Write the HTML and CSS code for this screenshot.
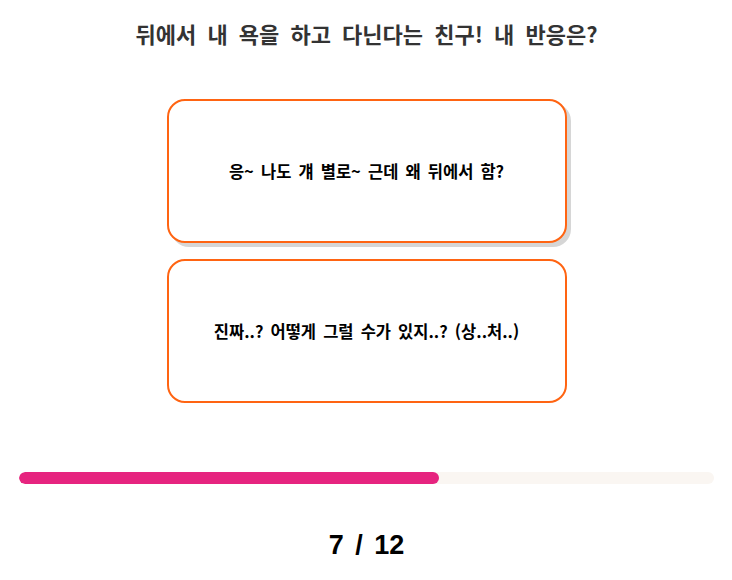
FILE: index.html
```html
<!DOCTYPE html>
<html lang="ko">
<head>
<meta charset="utf-8">
<link rel="stylesheet" href="styles.css">
</head>
<body>
<main class="quiz">
  <h1 class="question">뒤에서 내 욕을 하고 다닌다는 친구! 내 반응은?</h1>
  <div class="answers">
    <button class="answer hovered">응~ 나도 걔 별로~ 근데 왜 뒤에서 함?</button>
    <button class="answer">진짜..? 어떻게 그럴 수가 있지..? (상..처..)</button>
  </div>
  <div class="progress"><div class="fill" style="width:60.5%"></div></div>
  <div class="count">7 / 12</div>
</main>
</body>
</html>
```
FILE: styles.css
```css
html, body {
  margin: 0;
  padding: 0;
  background: #fff;
}
body {
  font-family: "Noto Sans CJK KR", "Noto Sans", sans-serif;
}
.quiz {
  display: flex;
  flex-direction: column;
  align-items: center;
  padding: 0 18px 0 19px;
}
.question {
  margin: 17px 0 0;
  font-size: 22px;
  font-weight: 700;
  color: #333;
  line-height: 32px;
  word-spacing: 5px;
}
.answers {
  display: flex;
  flex-direction: column;
  gap: 16px;
  margin-top: 50px;
}
.answer {
  width: 400px;
  height: 144px;
  box-sizing: border-box;
  border: 2px solid #ff6412;
  border-radius: 18px;
  background: #fff;
  font-family: "Noto Sans CJK KR", "Noto Sans", sans-serif;
  font-size: 16.5px;
  font-weight: 700;
  color: #000;
  word-spacing: 2.5px;
  padding: 0;
}
.answer.hovered {
  box-shadow: 4px 4px 0 #d6d6d6;
}
.progress {
  align-self: stretch;
  height: 12px;
  border-radius: 6px;
  background: #faf6f2;
  margin-top: 69px;
  overflow: hidden;
}
.fill {
  height: 100%;
  background: #e6247f;
  border-radius: 6px;
}
.count {
  margin-top: 45px;
  font-family: "Liberation Sans", Arial, sans-serif;
  font-size: 27px;
  font-weight: 700;
  color: #000;
  line-height: 32px;
  word-spacing: 4px;
}
```
